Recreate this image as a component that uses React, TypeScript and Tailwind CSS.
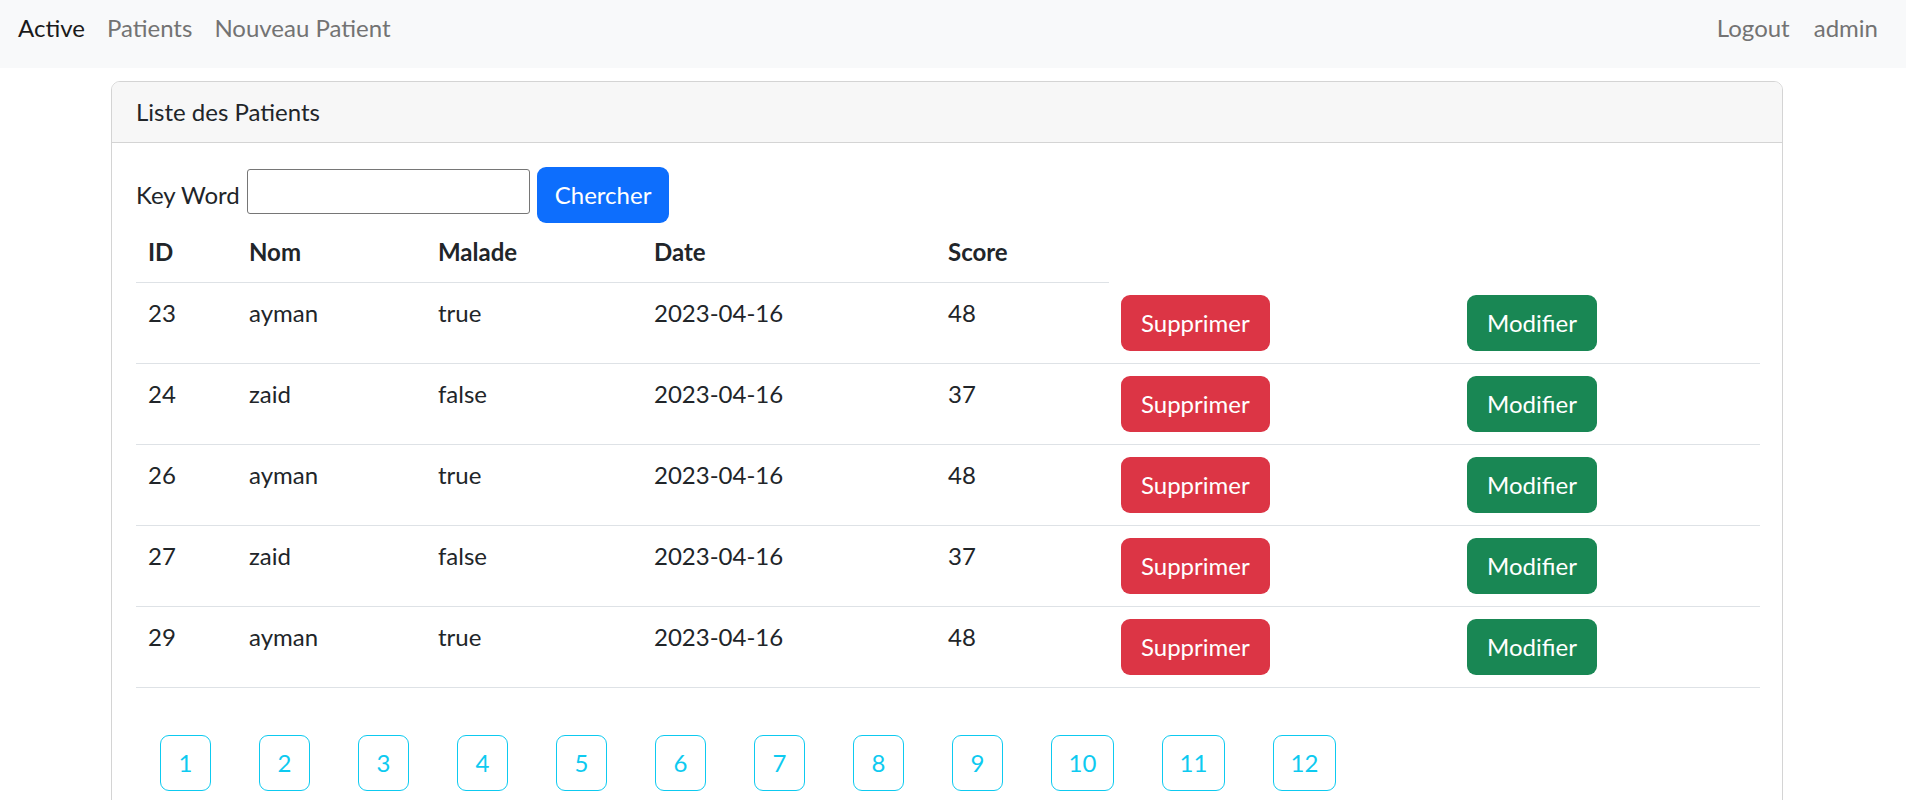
import React from "react";

const rows = [
  { id: 23, nom: "ayman", malade: "true", date: "2023-04-16", score: 48 },
  { id: 24, nom: "zaid", malade: "false", date: "2023-04-16", score: 37 },
  { id: 26, nom: "ayman", malade: "true", date: "2023-04-16", score: 48 },
  { id: 27, nom: "zaid", malade: "false", date: "2023-04-16", score: 37 },
  { id: 29, nom: "ayman", malade: "true", date: "2023-04-16", score: 48 },
];

const headers = ["ID", "Nom", "Malade", "Date", "Score"];
const pages = [1, 2, 3, 4, 5, 6, 7, 8, 9, 10, 11, 12];

export default function App() {
  return (
    <div className="min-h-screen bg-white font-[Lato,sans-serif] text-[24px] leading-[36px] text-[#212529]">
      <nav className="flex h-[68px] items-start justify-between bg-[#f8f9fa] pl-[18px] pr-[28px] pt-[10px]">
        <div className="flex gap-[22px]">
          <a className="text-[#1a1a1a]">Active</a>
          <a className="text-[#737373]">Patients</a>
          <a className="text-[#737373]">Nouveau Patient</a>
        </div>
        <div className="flex gap-[24px] text-[#737373]">
          <a>Logout</a>
          <a>admin</a>
        </div>
      </nav>

      <div className="ml-[111px] mt-[13px] w-[1672px] rounded-[9px] border border-[#d4d4d4]">
        <div className="rounded-t-[8px] border-b border-[#d4d4d4] bg-[#f7f7f7] px-[24px] py-[12px]">
          Liste des Patients
        </div>
        <div className="px-[24px] pt-[24px] pb-[24px]">
          <form className="flex items-center">
            <label>Key Word</label>
            <input
              type="text"
              className="mb-[7px] ml-[7px] h-[45px] w-[283px] rounded-[3px] border border-[#767676] bg-white px-[4px]"
            />
            <button
              type="button"
              className="ml-[7px] h-[56px] rounded-[9px] bg-[#0d6efd] px-[18px] text-white"
            >
              Chercher
            </button>
          </form>

          <div className="grid grid-cols-[101px_189px_216px_294px_173px_346px_305px]">
            {headers.map((h) => (
              <div key={h} className="border-b border-[#dee2e6] px-[12px] pt-[11px] pb-[12px] font-bold">
                {h}
              </div>
            ))}
            <div />
            <div />
            {rows.map((r) => (
              <React.Fragment key={r.id}>
                <div className="border-b border-[#dee2e6] px-[12px] py-[12px]">{r.id}</div>
                <div className="border-b border-[#dee2e6] px-[12px] py-[12px]">{r.nom}</div>
                <div className="border-b border-[#dee2e6] px-[12px] py-[12px]">{r.malade}</div>
                <div className="border-b border-[#dee2e6] px-[12px] py-[12px]">{r.date}</div>
                <div className="border-b border-[#dee2e6] px-[12px] py-[12px]">{r.score}</div>
                <div className="border-b border-[#dee2e6] px-[12px] py-[12px]">
                  <button
                    type="button"
                    className="h-[56px] rounded-[9px] bg-[#dc3545] px-[20px] text-white"
                  >
                    Supprimer
                  </button>
                </div>
                <div className="border-b border-[#dee2e6] px-[12px] py-[12px]">
                  <button
                    type="button"
                    className="h-[56px] rounded-[9px] bg-[#198754] px-[20px] text-white"
                  >
                    Modifier
                  </button>
                </div>
              </React.Fragment>
            ))}
          </div>

          <ul className="mt-[47px] flex gap-[48px] pl-[24px]">
            {pages.map((p) => (
              <li key={p}>
                <a
                  className={
                    "flex h-[56px] items-center justify-center rounded-[9px] border border-[#0dcaf0] text-[#0dcaf0] " +
                    (p < 10 ? "w-[51px]" : "w-[63px]")
                  }
                >
                  {p}
                </a>
              </li>
            ))}
          </ul>
        </div>
      </div>
    </div>
  );
}
